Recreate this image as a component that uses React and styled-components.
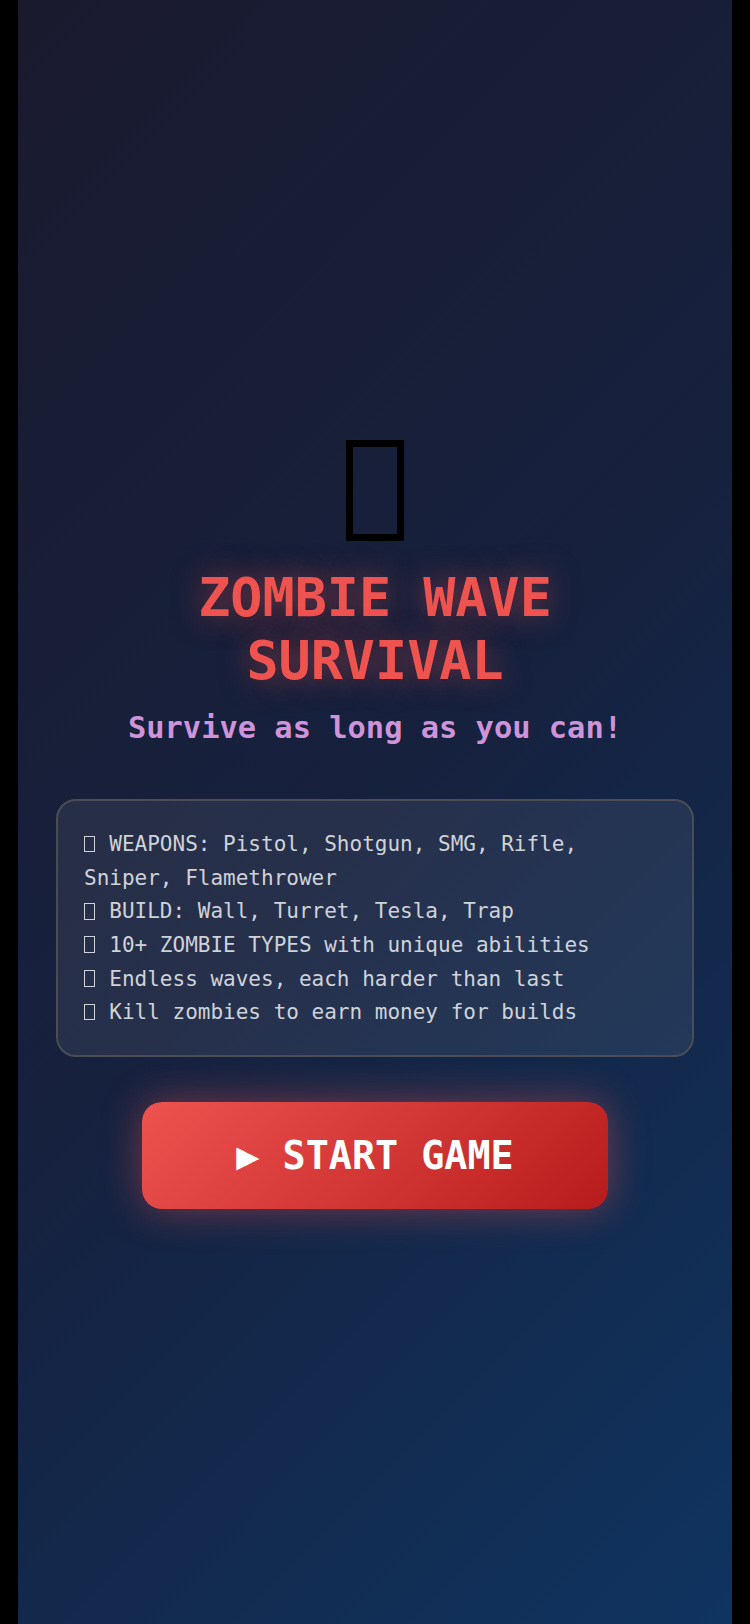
import React from 'react'
import styled, { createGlobalStyle } from 'styled-components'

const GlobalStyle = createGlobalStyle`
  html, body {
    margin: 0;
    padding: 0;
    background: #000;
  }
  * {
    box-sizing: border-box;
  }
`

const Screen = styled.div`
  max-width: 714px;
  min-height: 100vh;
  margin: 0 auto;
  display: flex;
  flex-direction: column;
  align-items: center;
  justify-content: center;
  background: linear-gradient(135deg, #1a1a2e 0%, #16213e 50%, #0f3460 100%);
  font-family: "DejaVu Sans Mono", monospace;
`

// empty glyph box, the way a missing emoji shows up
const HeroGlyph = styled.div`
  width: 58px;
  height: 101px;
  margin: 25px 0;
  border: 7px solid #000;
`

const Glyph = styled.span`
  display: inline-block;
  width: 0.53em;
  height: 0.8em;
  margin-right: 0.072em;
  vertical-align: -0.06em;
  border: 1.5px solid currentColor;
`

const Title = styled.h1`
  margin: 0;
  font-size: 53.4px;
  font-weight: 700;
  line-height: normal;
  color: #ef5350;
  text-align: center;
  text-shadow: 0 0 30px rgba(239, 83, 80, 0.5);
`

const Subtitle = styled.p`
  margin: 18px 0 0;
  font-size: 30.4px;
  font-weight: 700;
  line-height: normal;
  color: #ce93d8;
  text-align: center;
`

const InfoBox = styled.div`
  width: 638px;
  margin-top: 54px;
  padding: 27px 26px 25px;
  border: 2px solid #4a4c56;
  border-radius: 20px;
  background: rgba(255, 255, 255, 0.07);
  color: #cfd2d8;
  font-size: 21px;
  line-height: 1.6;
`

const InfoLine = styled.div``

const StartButton = styled.button`
  margin-top: 45px;
  padding: 31px 94px;
  border: 0;
  border-radius: 20px;
  background: linear-gradient(135deg, #ef5350 0%, #b71c1c 100%);
  color: #fff;
  font-family: inherit;
  font-size: 38.4px;
  font-weight: 700;
  line-height: normal;
  cursor: pointer;
  box-shadow: 0 0 40px rgba(239, 83, 80, 0.45);
`

const features = [
  { icon: 'gun', text: 'WEAPONS: Pistol, Shotgun, SMG, Rifle, Sniper, Flamethrower' },
  { icon: 'hammer', text: 'BUILD: Wall, Turret, Tesla, Trap' },
  { icon: 'zombie', text: '10+ ZOMBIE TYPES with unique abilities' },
  { icon: 'wave', text: 'Endless waves, each harder than last' },
  { icon: 'money', text: 'Kill zombies to earn money for builds' },
]

const App = () => {
  return (
    <>
      <GlobalStyle />
      <Screen>
        <HeroGlyph />
        <Title>
          ZOMBIE WAVE
          <br />
          SURVIVAL
        </Title>
        <Subtitle>Survive as long as you can!</Subtitle>
        <InfoBox>
          {features.map(item => (
            <InfoLine key={item.icon}>
              <Glyph /> {item.text}
            </InfoLine>
          ))}
        </InfoBox>
        <StartButton>▶ START GAME</StartButton>
      </Screen>
    </>
  )
}

export default App
